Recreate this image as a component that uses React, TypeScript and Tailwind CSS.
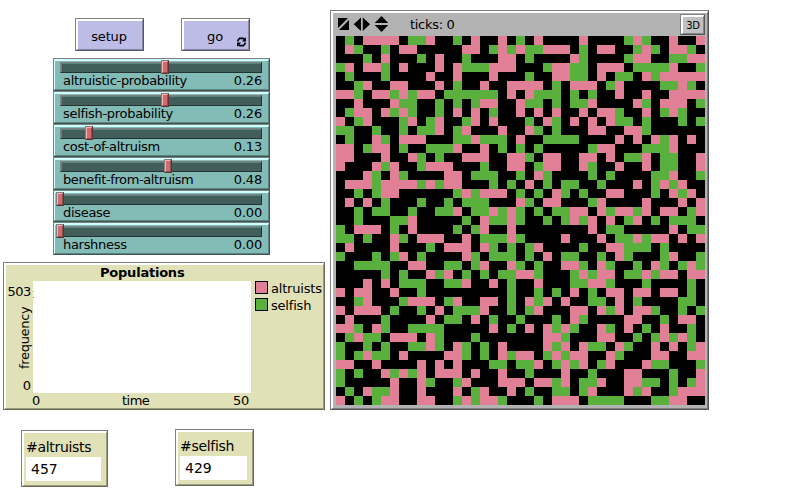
import React from "react";

// Patch colours, one character per patch: P = altruist, G = selfish, . = empty
const WORLD = [
  ".G.PPPP.GG" + "P..G.P..P." + "G.P....P.." + "..GPG..P.." + "P",
  ".PG..G.PP." + "....PP.GPG" + "PGGPPP.G.P" + "P..GPG.PPG" + ".",
  "...G.P...G" + ".P..G...PP" + ".G....PG.." + "..GPP..GGP" + "P",
  "GP.PPG.P.." + ".P.PGGGPPP" + "...GPPGG.P" + "PP.GGGGP.." + "G",
  ".G...G...." + "P..P...P.." + ".G..PPGG.P" + ".GG.PGPPPP" + "P",
  "..GP..PP.." + ".P.G..P..P" + "PPP.G.PPP." + "GP....GGPG" + ".",
  "PPG.PPGPGP" + "P.GGGGGG.P" + ".PGGG.G.G." + ".P..P..PPP" + "P",
  "..P...PGG." + ".G.G.GPP.." + "PGG.G.GGP." + "...PG.PPP." + "G",
  ".GPP.PGPG." + ".G.P.P.G.." + "P.P.P..P.P" + "PG..P.GPG." + ".",
  "P.GP...GP." + "GP..GP.P.." + ".G.PG.P.P." + "PGG.G...G." + "G",
  "GG..G..G.G" + "GP.GP...P." + ".PG.G...PP" + "..PPG....." + ".",
  ".G..PG.PPP" + "...GGPGGG." + "P..GGGG..." + ".P.P.PGP.P" + ".",
  "PP.GPP.G.." + "GGGP..P.G." + "G.G.....GP" + "P...GGGP.." + ".",
  "PP...P..PG" + ".G..PPP..P" + "PG.PP..PP." + "P.GGP.GG.." + "P",
  "P...PGP..G" + "PPP...G..P" + "P.GPP..PG." + ".P..P.GG.." + "P",
  "...PG.PG.." + "..PP.GGG.." + "G.PG....G." + "G....GGP.." + "G",
  ".PPPGPPPPG" + "PGPP...G.G" + ".P.G.GG..G" + "...P.GPGP." + ".",
  "..G.GPP..." + "...GPGPPP." + "G.G.PG.G.." + "PP...G.PGP" + ".",
  ".P.P.G...G" + "..G.GGG..." + "PG.PP...GP" + "....P...P." + "P",
  "..G.GG..G." + ".GGP.GGPGP" + "G.G.GGPP.P" + "GPPGP.PP.G" + "P",
  "..G...GGP." + "....G.PGGP" + "G..G.GPGP." + "P.GP.G.GGG" + ".",
  "G.PPP.G.P." + "...G.GP..P" + "........P." + "GG.....P.G" + "G",
  "GG.G..PG.P" + "PP..P.GGGP" + "G....P...P" + ".GGPGPP.P." + "P",
  ".P....P..." + "G.PPP.PG.G" + ".GP....G.." + "PPGGG.G..." + ".",
  "G...G.GP.G" + "....PG.GGG" + ".G.P.GG..G" + ".PG...GP.." + "G",
  "..GGGG..PP" + "..GG.GP..P" + "G.G..PPG.P" + "G..G.PG.GP" + "G",
  ".....G.G.." + "PGP.G.G.GG" + "PPG...GPGP" + "P.GGPGPP.P" + "P",
  "...P.P.GGG" + "..GGP..P.G" + "..P...GGPP" + "G...G....G" + ".",
  "P.PP..P..G" + ".........G" + "..G.G.P.G." + "PP.PP.PP.G" + ".",
  "..GP...GPP" + "P.GP..PP.G" + ".PGP.P..GG" + ".P.G....GG" + ".",
  "P.PPP.G..G" + ".P.GGGP..G" + ".GP...PP.P" + "GP.PPG..G." + "G",
  ".P...G...." + "P.GG.P.G.." + "G...G.PG.." + "..PP..G.PP" + ".",
  "PPG.PG..GG" + "GG.....P.G" + ".P.PGPG..P" + "G.P.G.P..G" + ".",
  ".GPGG.PPP." + "PG...G...." + "...PPG...P" + "P..G.GPGPG" + ".",
  "G..G.G..GG" + "PG.PG.G.P." + "...PGP.PGG" + ".PG..P.P.G" + "P",
  "G.GPGG.P.." + "..PPG.G.PG" + "PP.GPGPP.." + "PG...PP..P" + "P",
  "PP..P....P" + ".P.P...GG." + "GGP.GPGP.G" + "P...PGG..." + "G",
  "G.G..PGPGP" + ".PPP.P..P." + ".G...P..G." + "..PP...G.." + "P",
  "G.....P..P" + "G..GP...PP" + "P.PPGP.GGP" + "..PPGG.G.G" + "P",
  ".G.PGGP..P" + "...P.GP..P" + ".G..GG.GP." + "..PGP..GPP" + "P",
  "P.G.GPP..P" + "P..GPGPPG." + "..G.PPP.GG" + "GG...GGPP." + ".",
];

const CELL = 9;

function World() {
  return (
    <svg width="369" height="369" shapeRendering="crispEdges" className="block bg-black">
      {WORLD.flatMap((row, y) =>
        [...row].map((c, x) =>
          c === "." ? null : (
            <rect
              key={`${x}-${y}`}
              x={x * CELL}
              y={y * CELL}
              width={CELL}
              height={CELL}
              fill={c === "P" ? "#e17f96" : "#59b03c"}
            />
          ),
        ),
      )}
    </svg>
  );
}

function CommandButton({ label, forever }: { label: string; forever?: boolean }) {
  return (
    <button className="h-[33px] w-[69px] border border-t-[#808080] border-l-[#808080] border-r-[#58586b] border-b-[#58586b]">
      <span className="relative flex h-full w-full items-center justify-center border-t-2 border-l-2 border-r border-b border-t-white border-l-white border-r-[#8384a1] border-b-[#8384a1] bg-[#bcbce6] pt-[3px] pr-[2px] tracking-[-0.15px]">
        {label}
        {forever && (
          <svg width="9" height="10" viewBox="0 0 9 10" className="absolute right-[2px] bottom-[2px]">
            <path d="M1 4.5V3.2L2.6 1.3H6.4L7.4 2.3" fill="none" stroke="black" strokeWidth="1.7" />
            <path d="M9 0.2V4.4H4.8z" fill="black" />
            <path d="M8 5.5V6.8L6.4 8.7H2.6L1.6 7.7" fill="none" stroke="black" strokeWidth="1.7" />
            <path d="M0 9.8V5.6H4.2z" fill="black" />
          </svg>
        )}
      </span>
    </button>
  );
}

type SliderProps = { name: string; value: string; knob: number; short?: boolean; tight?: boolean };

function Slider({ name, value, knob, short, tight }: SliderProps) {
  return (
    <div
      className={`${short ? "h-8" : "h-[33px]"} w-[217px] border border-t-[#808080] border-l-[#808080] border-r-[#3d5755] border-b-[#3d5755]`}
    >
      <div className="h-full border-t-2 border-l border-r border-b border-t-[#cfffff] border-l-[#d8ffff] border-r-[#5b837f] border-b-[#5b837f] bg-[#83bbb6]">
        <div className="relative ml-[5px] mt-px h-[11px] w-[202px] border border-t-[#808080] border-l-[#808080] border-r-[#233331] border-b-[#233331]">
          <div className="h-full border-t border-l border-[#5b837f] bg-[#425e5b]" />
          <div
            className="absolute -top-[3px] h-[14px] w-2 border border-t-[#808080] border-l-[#808080] border-r-[#5f3333] border-b-[#5f3333]"
            style={{ left: knob }}
          >
            <div className="h-full border border-t-[#ffb0b0] border-l-[#ffb0b0] border-r-[#8f4c4c] border-b-[#8f4c4c] bg-[#cd6d6d]" />
          </div>
        </div>
        <div className="flex justify-between pt-px pl-2 pr-[6px] leading-[14px]">
          <span className={tight ? "tracking-[-0.4px]" : "tracking-[-0.3px]"}>{name}</span>
          <span className="tracking-[-0.2px]">{value}</span>
        </div>
      </div>
    </div>
  );
}

function Panel({ className, children }: { className: string; children: React.ReactNode }) {
  return (
    <div
      className={`border border-t-[#808080] border-l-[#808080] border-r-[#696955] border-b-[#696955] ${className}`}
    >
      <div className="h-full border-t-2 border-l-2 border-r border-b border-t-white border-l-white border-r-[#9c9d7f] border-b-[#9c9d7f] bg-[#e0e1b6]">
        {children}
      </div>
    </div>
  );
}

function Monitor({ label, value, className, field }: { label: string; value: string; className: string; field: string }) {
  return (
    <Panel className={`h-[57px] text-[14px] ${className}`}>
      <div className="h-6 pl-[2px] pt-[6px] leading-4 tracking-[-0.3px]">{label}</div>
      <div className={`ml-[2px] h-6 bg-white pl-[5px] leading-6 ${field}`}>{value}</div>
    </Panel>
  );
}

function Plot() {
  return (
    <Panel className="ml-[3px] mt-[7px] h-[148px] w-[322px]">
      <div className="h-4 pl-[94px] pt-px leading-[13px] font-bold tracking-[-0.22px]">Populations</div>
      <div className="flex">
        <div className="flex h-[112px] w-[27px] flex-col items-end">
          <span className="mt-[4px] h-[14px] pr-[2px] leading-[14px] tracking-[-0.4px]">503</span>
          <span className="mt-[7px] flex h-[64px] w-4 items-center justify-center pr-px">
            <span className="-rotate-90 tracking-[-0.3px]">frequency</span>
          </span>
          <span className="mt-[9px] h-[14px] pr-[2px] leading-[14px]">0</span>
        </div>
        <div className="h-[112px] w-[218px] bg-white pt-[10px]">
          <div className="h-px w-px bg-[#b5b5a0]" />
          <div className="mt-[5px] h-px w-px bg-[#808070]" />
        </div>
        <div className="ml-1 flex flex-col gap-1">
          <div className="flex h-[13px] items-center gap-[3px]">
            <span className="h-[13px] w-[13px] border border-black bg-[#e17f96]" />
            <span className="mt-[2px] leading-[13px] tracking-[-0.2px]">altruists</span>
          </div>
          <div className="flex h-[13px] items-center gap-[3px]">
            <span className="h-[13px] w-[13px] border border-black bg-[#59b03c]" />
            <span className="mt-[2px] leading-[13px] tracking-[-0.2px]">selfish</span>
          </div>
        </div>
      </div>
      <div className="ml-[27px] flex w-[218px] leading-[15px]">
        <span className="-ml-px w-[90px]">0</span>
        <span className="tracking-[-0.5px]">time</span>
        <span className="ml-auto pr-[2px] tracking-[-0.3px]">50</span>
      </div>
    </Panel>
  );
}

function View() {
  return (
    <div className="ml-[5px] mt-[10px] h-[400px] w-[379px] border border-t-[#808080] border-l-[#808080] border-r-[#545454] border-b-[#545454]">
      <div className="h-full border-t-2 border-l-2 border-r border-b border-t-white border-l-white border-r-[#7d7d7d] border-b-[#7d7d7d] bg-[#b3b3b3]">
        <div className="flex h-[23px] pl-[5px]">
          <svg width="51" height="16" viewBox="0 0 51 16" className="mt-[3px]">
            <path d="M0 2H10L0 12z M11 4V14H1z" fill="black" />
            <path d="M23 1.5V15L15.7 8.2z M24.8 1.5V15L32 8.2z" fill="black" />
            <path d="M36.7 7H50.3L43.5 0z M36.7 9H50.3L43.5 16z" fill="black" />
          </svg>
          <span className="ml-[21px] mt-[4px] leading-4 tracking-[-0.3px]">ticks: 0</span>
          <button className="ml-auto mr-[2px] mt-px h-[21px] w-[25px] border border-t-[#808080] border-l-[#808080] border-r-[#585858] border-b-[#585858]">
            <span className="flex h-full w-full items-center justify-center border-t-2 border-l-2 border-r border-b border-t-white border-l-white border-r-[#858585] border-b-[#858585] bg-[#c0c0c0] pt-px text-[10px] tracking-[-0.2px]">
              3D
            </span>
          </button>
        </div>
        <div className="ml-[3px]">
          <World />
        </div>
      </div>
    </div>
  );
}

export default function App() {
  return (
    <div className="flex h-[499px] w-[789px] overflow-hidden bg-white font-['DejaVu_Sans',sans-serif] text-[13px] text-black">
      <div className="w-[325px] shrink-0">
        <div className="flex gap-[37px] pt-[18px] pl-[75px]">
          <CommandButton label="setup" />
          <CommandButton label="go" forever />
        </div>
        <div className="mt-[7px] ml-[53px]">
          <Slider name="altruistic-probability" value="0.26" knob={100} />
          <Slider name="selfish-probability" value="0.26" knob={100} />
          <Slider name="cost-of-altruism" value="0.13" knob={24} />
          <Slider name="benefit-from-altruism" value="0.48" knob={103} tight />
          <Slider name="disease" value="0.00" knob={-5} short />
          <Slider name="harshness" value="0.00" knob={-5} />
        </div>
        <Plot />
        <div className="flex pl-[21px]">
          <Monitor label="#altruists" value="457" className="mt-5 w-[87px]" field="w-[75px]" />
          <Monitor label="#selfish" value="429" className="ml-[67px] mt-[19px] w-[79px]" field="w-[67px]" />
        </div>
      </div>
      <View />
    </div>
  );
}
